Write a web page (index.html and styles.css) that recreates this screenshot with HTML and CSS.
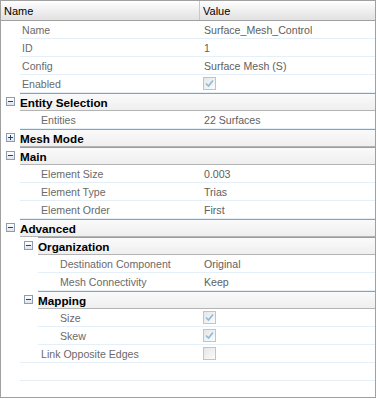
FILE: index.html
```html
<!DOCTYPE html>
<html>
<head>
<meta charset="utf-8">
<link rel="stylesheet" href="styles.css">
</head>
<body>
<div class="grid">
  <div class="hdr">
    <div class="hc hname">Name</div>
    <div class="hc hval">Value</div>
  </div>

  <div class="row p0"><div class="k">Name</div><div class="v">Surface_Mesh_Control</div></div>
  <div class="row p0"><div class="k">ID</div><div class="v">1</div></div>
  <div class="row p0"><div class="k">Config</div><div class="v">Surface Mesh (S)</div></div>
  <div class="row p0"><div class="k">Enabled</div><div class="v"><span class="cb on"><svg viewBox="0 0 11 11"><polyline points="2,5.5 4.5,8 9,2.5"/></svg></span></div></div>

  <div class="grp g0"><span class="tog minus"></span><div class="gt">Entity Selection</div></div>
  <div class="row p1"><div class="k">Entities</div><div class="v">22 Surfaces</div></div>

  <div class="grp g0"><span class="tog plus"></span><div class="gt">Mesh Mode</div></div>

  <div class="grp g0"><span class="tog minus"></span><div class="gt">Main</div></div>
  <div class="row p1"><div class="k">Element Size</div><div class="v">0.003</div></div>
  <div class="row p1"><div class="k">Element Type</div><div class="v">Trias</div></div>
  <div class="row p1"><div class="k">Element Order</div><div class="v">First</div></div>

  <div class="grp g0"><span class="tog minus"></span><div class="gt">Advanced</div></div>
  <div class="grp g1"><span class="tog minus"></span><div class="gt">Organization</div></div>
  <div class="row p2"><div class="k">Destination Component</div><div class="v">Original</div></div>
  <div class="row p2"><div class="k">Mesh Connectivity</div><div class="v">Keep</div></div>
  <div class="grp g1"><span class="tog minus"></span><div class="gt">Mapping</div></div>
  <div class="row p2"><div class="k">Size</div><div class="v"><span class="cb on"><svg viewBox="0 0 11 11"><polyline points="2,5.5 4.5,8 9,2.5"/></svg></span></div></div>
  <div class="row p2"><div class="k">Skew</div><div class="v"><span class="cb on"><svg viewBox="0 0 11 11"><polyline points="2,5.5 4.5,8 9,2.5"/></svg></span></div></div>
  <div class="row p1"><div class="k">Link Opposite Edges</div><div class="v"><span class="cb"></span></div></div>

  <div class="row p1 empty"><div class="k"></div><div class="v"></div></div>
  <div class="row p1 empty"><div class="k"></div><div class="v"></div></div>
</div>
</body>
</html>
```

FILE: styles.css
```css
html, body {
  margin: 0;
  padding: 0;
  background: #ffffff;
}

.grid {
  width: 374px;
  height: 396px;
  border: 1px solid #a0a0a0;
  overflow: hidden;
  font-family: "Liberation Sans", Arial, sans-serif;
  font-size: 10.6px;
  color: #6a6a6a;
  background: #ffffff;
}

.hdr {
  display: flex;
  height: 19px;
  border-bottom: 1px solid #a0a0a0;
  background: linear-gradient(#ffffff, #f2f2f2 40%, #e2e2e2);
}

.hc {
  display: flex;
  align-items: center;
  color: #000000;
  font-size: 11px;
  padding-left: 3px;
  box-sizing: border-box;
}

.hname {
  width: 199px;
  border-right: 1px solid #c8c8c8;
}

.hval {
  flex: 1;
  padding-left: 3px;
}

.row {
  display: flex;
  height: 18px;
}

.row .k {
  box-sizing: border-box;
  display: flex;
  align-items: center;
  border-bottom: 1px solid #e4eff7;
  white-space: nowrap;
}

.row .v {
  flex: 1;
  display: flex;
  align-items: center;
  padding-left: 4px;
  border-bottom: 1px solid #e4eff7;
  color: #606060;
  white-space: nowrap;
}

.p0, .p1 { padding-left: 19px; }
.p2 { padding-left: 37px; }

.p0 .k { width: 180px; padding-left: 2px; }
.p1 .k { width: 180px; padding-left: 21px; }
.p2 .k { width: 162px; padding-left: 22px; }

.grp {
  display: flex;
  height: 18px;
  position: relative;
}

.grp .gt {
  flex: 1;
  box-sizing: border-box;
  border-top: 1px solid #9c9c9c;
  border-bottom: 1px solid #b4b4b4;
  background: linear-gradient(#fafafa, #efefef);
  display: flex;
  align-items: center;
  font-weight: bold;
  font-size: 11.7px;
  color: #000000;
  padding-left: 0;
}

.g0 { padding-left: 19px; }
.g1 { padding-left: 37px; }

.tog {
  position: absolute;
  top: 4px;
  width: 7px;
  height: 7px;
  border: 1px solid #8c9cb2;
  background: linear-gradient(#ffffff, #dfe3ea);
}

.g0 .tog { left: 5px; }
.g1 .tog { left: 23px; }

.tog::before {
  content: "";
  position: absolute;
  left: 1px;
  top: 3px;
  width: 5px;
  height: 1px;
  background: #2a3f6a;
}

.tog.plus::after {
  content: "";
  position: absolute;
  left: 3px;
  top: 1px;
  width: 1px;
  height: 5px;
  background: #2a3f6a;
}

.cb {
  display: inline-block;
  width: 11px;
  height: 11px;
  border: 1px solid #c4c4c4;
  background: linear-gradient(135deg, #e6e6e6, #fbfbfb);
  margin-left: -1px;
}

.cb svg {
  display: block;
  width: 11px;
  height: 11px;
}

.cb polyline {
  fill: none;
  stroke: #8bbbd8;
  stroke-width: 1.6;
}
```
